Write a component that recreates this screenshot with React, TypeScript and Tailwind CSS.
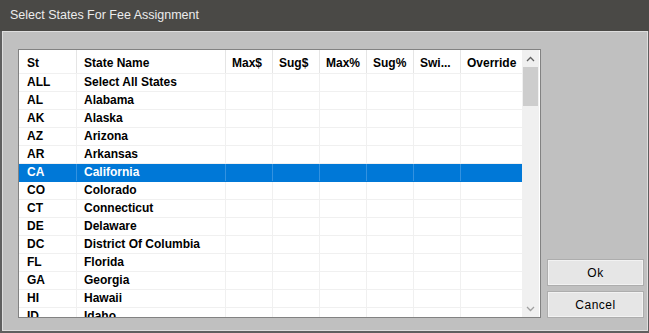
import React from 'react'

const rows: [string, string][] = [
  ['ALL', 'Select All States'],
  ['AL', 'Alabama'],
  ['AK', 'Alaska'],
  ['AZ', 'Arizona'],
  ['AR', 'Arkansas'],
  ['CA', 'California'],
  ['CO', 'Colorado'],
  ['CT', 'Connecticut'],
  ['DE', 'Delaware'],
  ['DC', 'District Of Columbia'],
  ['FL', 'Florida'],
  ['GA', 'Georgia'],
  ['HI', 'Hawaii'],
  ['ID', 'Idaho'],
]

const extraCols = ['Max$', 'Sug$', 'Max%', 'Sug%', 'Swi...']

function Row({ code, name, selected }: { code: string; name: string; selected: boolean }) {
  const line = selected ? 'border-[#3392e0]' : 'border-[#f0f0f0]'
  return (
    <div
      className={`flex h-[18px] shrink-0 border-b ${selected ? 'bg-[#0078d7] text-white border-[#0078d7]' : 'text-black border-[#f0f0f0]'}`}
    >
      <div className={`w-[58px] shrink-0 border-r pl-[8px] leading-[17px] ${line}`}>{code}</div>
      <div className={`w-[149px] shrink-0 border-r pl-[7px] leading-[17px] whitespace-nowrap ${line}`}>{name}</div>
      {extraCols.map((c) => (
        <div key={c} className={`w-[47px] shrink-0 border-r ${line}`} />
      ))}
      <div className="flex-1" />
    </div>
  )
}

export default function App() {
  return (
    <div className="flex h-[333px] w-[649px] flex-col overflow-hidden bg-[#5f5f5f] font-['Liberation_Sans',Arial,sans-serif]">
      <div className="flex h-[31px] shrink-0 items-center bg-[#4a4946] pl-[10px] font-['Liberation_Sans',Arial,sans-serif] text-[12.5px] text-[#ececec]">
        Select States For Fee Assignment
      </div>
      <div className="flex min-h-0 flex-1 px-[2px] pb-[2px]">
        <div className="flex min-h-0 flex-1 border border-[#dedede] bg-[#c0c0c0] pl-[15px] pr-[3px] pt-[17px] pb-[12px]">
          <div className="flex min-h-0 w-[523px] shrink-0 border border-[#828282] bg-white">
            <div className="flex min-h-0 w-[503px] shrink-0 flex-col overflow-hidden text-[12px] font-bold">
              <div className="flex h-[24px] shrink-0 border-b border-[#f0f0f0] text-black">
                <div className="w-[58px] shrink-0 border-r border-[#e5e5e5] pl-[8px] pt-[4px]">St</div>
                <div className="w-[149px] shrink-0 border-r border-[#e5e5e5] pl-[7px] pt-[4px]">State Name</div>
                {extraCols.map((c) => (
                  <div key={c} className="w-[47px] shrink-0 border-r border-[#e5e5e5] pl-[6px] pt-[4px] whitespace-nowrap">
                    {c}
                  </div>
                ))}
                <div className="flex-1 pl-[6px] pt-[4px]">Override</div>
              </div>
              {rows.map(([code, name]) => (
                <Row key={code} code={code} name={name} selected={code === 'CA'} />
              ))}
            </div>
            <div className="flex w-[17px] shrink-0 flex-col bg-[#f0f0f0]">
              <div className="flex h-[17px] items-center justify-center">
                <svg width="9" height="6" viewBox="0 0 9 6">
                  <path d="M1 5 L4.5 1.5 L8 5" fill="none" stroke="#606060" strokeWidth="1.3" />
                </svg>
              </div>
              <div className="mx-[1px] h-[39px] bg-[#cdcdcd]" />
              <div className="flex-1" />
              <div className="flex h-[17px] items-center justify-center">
                <svg width="9" height="6" viewBox="0 0 9 6">
                  <path d="M1 1 L4.5 4.5 L8 1" fill="none" stroke="#a0a0a0" strokeWidth="1.3" />
                </svg>
              </div>
            </div>
          </div>
          <div className="flex flex-1 flex-col justify-end gap-[5px] pl-[6px]">
            <button className="h-[27px] w-[97px] border border-[#adadad] bg-[#e6e6e6] text-[12px] tracking-[0.5px] text-black shadow-[inset_0_0_0_1px_#f2f2f2]">
              Ok
            </button>
            <button className="h-[27px] w-[97px] border border-[#adadad] bg-[#e6e6e6] text-[12px] tracking-[0.5px] text-black shadow-[inset_0_0_0_1px_#f2f2f2]">
              Cancel
            </button>
          </div>
        </div>
      </div>
    </div>
  )
}
